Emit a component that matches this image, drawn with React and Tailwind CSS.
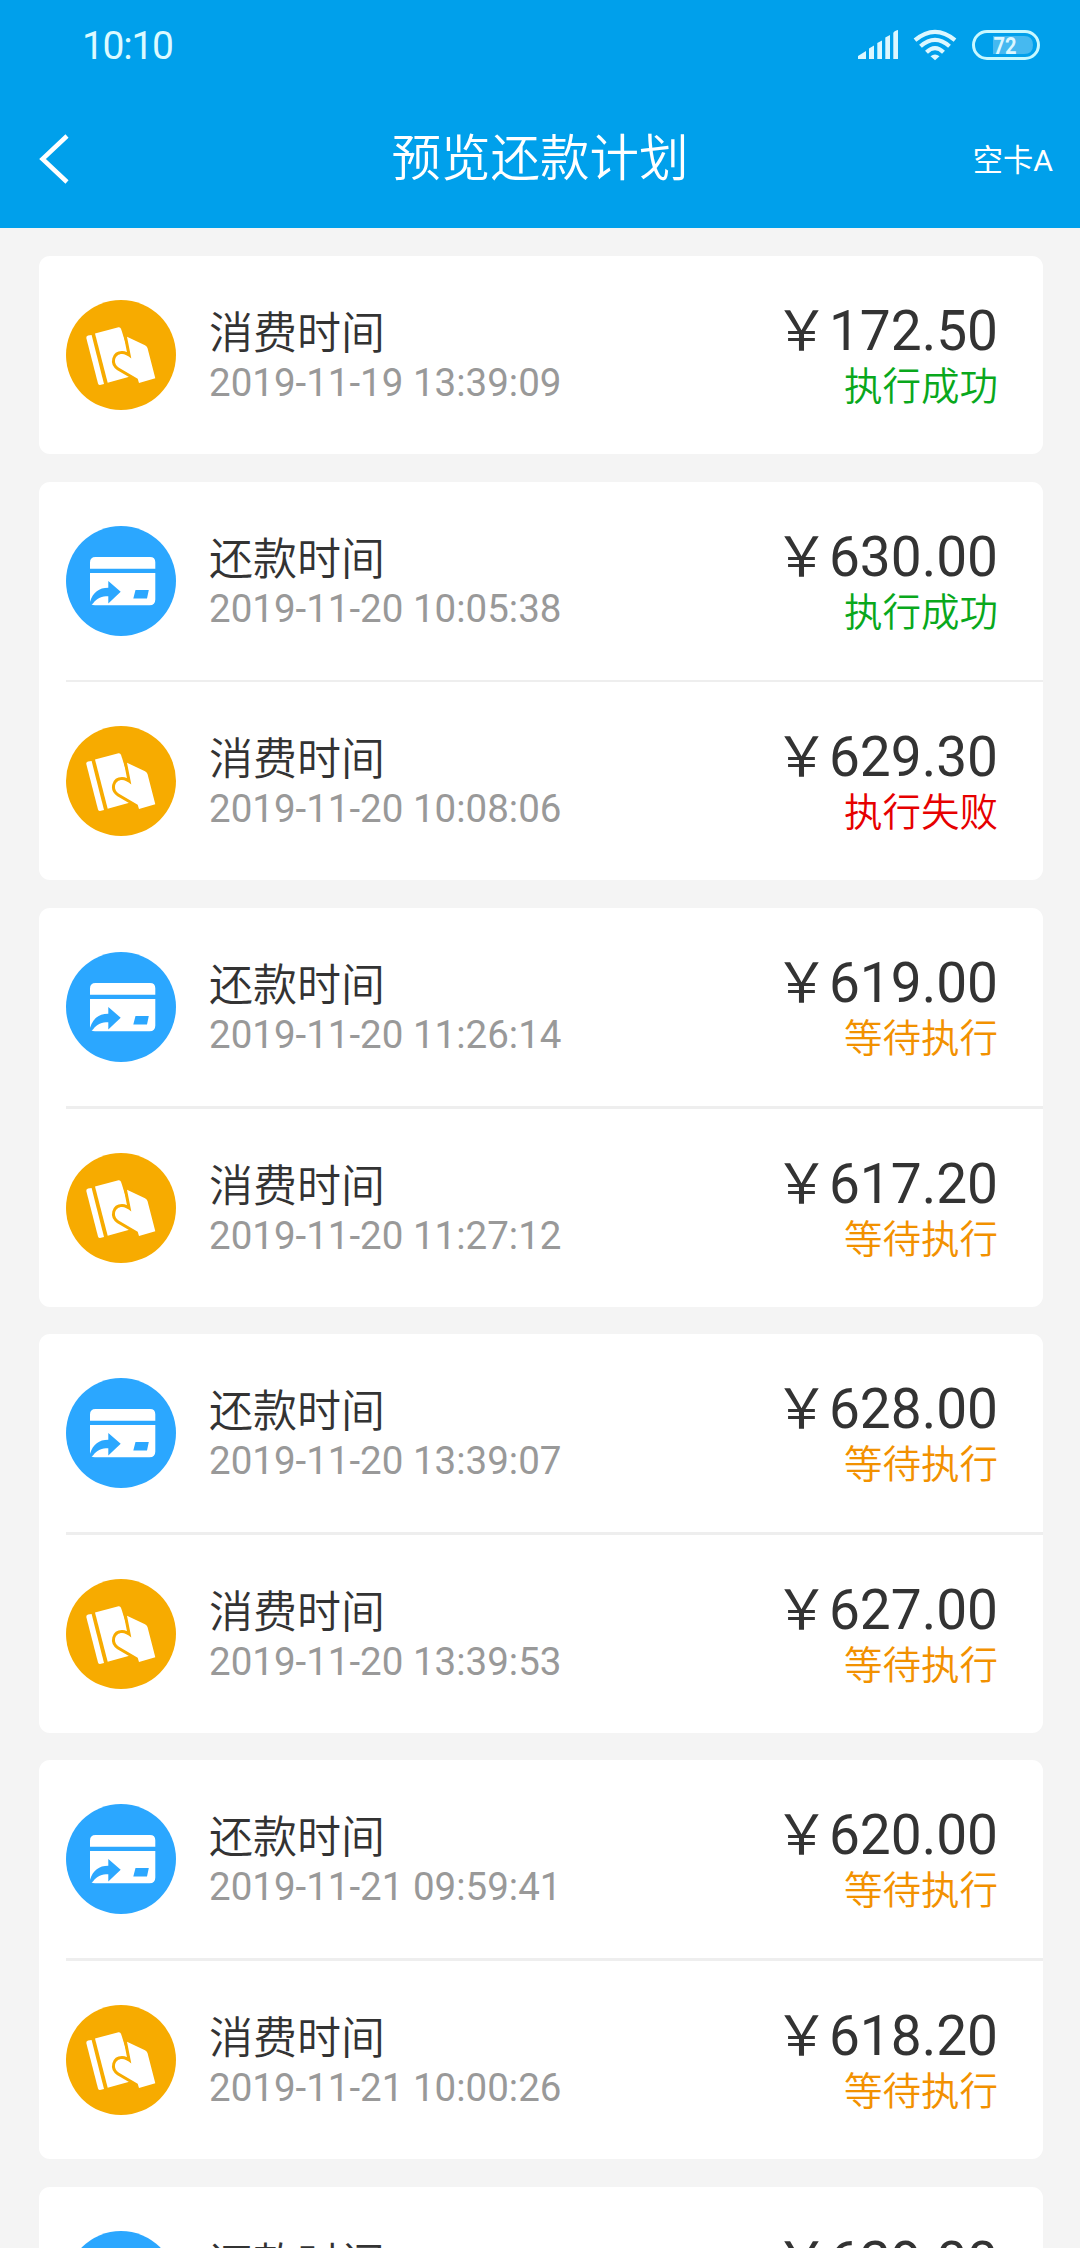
const groups = [
  [{ type: "spend", time: "2019-11-19 13:39:09", amount: "172.50", status: "success" }],
  [
    { type: "repay", time: "2019-11-20 10:05:38", amount: "630.00", status: "success" },
    { type: "spend", time: "2019-11-20 10:08:06", amount: "629.30", status: "failed" },
  ],
  [
    { type: "repay", time: "2019-11-20 11:26:14", amount: "619.00", status: "pending" },
    { type: "spend", time: "2019-11-20 11:27:12", amount: "617.20", status: "pending" },
  ],
  [
    { type: "repay", time: "2019-11-20 13:39:07", amount: "628.00", status: "pending" },
    { type: "spend", time: "2019-11-20 13:39:53", amount: "627.00", status: "pending" },
  ],
  [
    { type: "repay", time: "2019-11-21 09:59:41", amount: "620.00", status: "pending" },
    { type: "spend", time: "2019-11-21 10:00:26", amount: "618.20", status: "pending" },
  ],
  [{ type: "repay", time: "2019-11-21 11:18:32", amount: "629.00", status: "pending" }],
];

const statuses = {
  success: { label: "执行成功", color: "text-[#09a81c]" },
  failed: { label: "执行失败", color: "text-[#e60000]" },
  pending: { label: "等待执行", color: "text-[#f29100]" },
};

function SpendIcon() {
  return (
    <svg viewBox="0 0 110 110" className="size-[110px] shrink-0">
      <circle cx="55" cy="55" r="55" fill="#f7ab00" />
      <g fill="#fff">
        <path d="M22 35.5 25.6 35 38 84 34 85Q32.5 85 32 83.5L20.3 38Q20 36 22 35.5Z" />
        <path d="M29 33.5 52.5 27.3Q54.3 27 55 28.8L65 60 66 76 41.7 82.7Z" />
      </g>
      <path
        d="M61 36.7 79 45.2Q81 46.3 81.5 48L89.3 78.3 73 83 71.7 78.7 53 67.8C46 63 49 54 56 54Q60 54 65.3 58.6Z"
        fill="#fff"
        stroke="#f7ab00"
        strokeWidth="6"
        paintOrder="stroke"
      />
    </svg>
  );
}

function RepayIcon() {
  return (
    <svg viewBox="0 0 110 110" className="size-[110px] shrink-0">
      <circle cx="55" cy="55" r="55" fill="#2ba7ff" />
      <path
        d="M29.5 31H84Q89.3 31 89.3 36.3V42.7H24V36.5Q24 31 29.5 31ZM24 47H89.3V73.5Q89.3 79.3 83.5 79.3H29Q24 79.3 24 74Z"
        fill="#fff"
      />
      <path
        d="M24 76C27 66 33 61.7 42.3 61.7V55L54.7 65.7 42.3 77.5V70.3C36 70.3 31 72 27 77.5L24 79.5ZM69.5 64H82.8L81 72.5H67.3Z"
        fill="#2ba7ff"
      />
    </svg>
  );
}

function StatusIcons() {
  return (
    <svg viewBox="0 0 184 32" className="h-8 w-[184px]" fill="none">
      <path
        d="M0 30V27L8 22V30ZM11 30V19.5L16 16.5V30ZM19.3 30V14L24 11.5V30ZM27.3 30V8.5L32 6V30ZM35.3 30V4Q36 2 40 1V30Z"
        fill="#dcf7ff"
      />
      <g stroke="#dcf7ff" strokeWidth="4.2">
        <path d="M57 11.2Q77-5.4 97 11.2" />
        <path d="M62.5 17.3Q77 4.5 91.5 17.3" />
        <path d="M68.5 23.2Q77 15 85.5 23.2" />
      </g>
      <path d="M72.5 27.3Q77 23.5 81.5 27.3L77 31.3Z" fill="#dcf7ff" />
      <rect x="115.5" y="2.5" width="65" height="27" rx="13.5" stroke="#c8f8ff" strokeWidth="3" />
      <path d="M135 7H166Q175 7 175 16T166 25H135Z" fill="#46b9f0" />
      <g transform="translate(135.5 24.7) scale(.84 1)">
        <text fontSize="24" fontWeight="700" className="font-[Roboto,sans-serif]" fill="#dcf7ff">
          72
        </text>
      </g>
    </svg>
  );
}

function PlanRow({ item }) {
  const status = statuses[item.status];
  return (
    <div className="flex h-[198px] items-center pr-[45px]">
      {item.type === "repay" ? <RepayIcon /> : <SpendIcon />}
      <div className="ml-[33px] flex-1 pt-[2px]">
        <div className="text-[44px] leading-[54px]">
          {item.type === "repay" ? "还款时间" : "消费时间"}
        </div>
        <div className="text-[38.5px] leading-[44px] font-normal text-[#999]">{item.time}</div>
      </div>
      <div className="text-right">
        <div className="text-[55px] leading-[64px] font-normal">
          {"\uFFE5"}
          {item.amount}
        </div>
        <div className={`text-[38.5px] leading-[48px] ${status.color}`}>{status.label}</div>
      </div>
    </div>
  );
}

export default function App() {
  return (
    <div className="h-[2248px] w-[1080px] overflow-hidden bg-[#f4f4f4] font-[Roboto,'Noto_Sans_CJK_SC',sans-serif] font-[350] text-[#333]">
      {/* Header */}
      <header className="h-[228px] bg-[#00a0eb] text-white">
        <div className="flex h-[90px] items-center justify-between pr-[38px] pl-[82px]">
          <span className="pt-0.5 text-[39px] font-normal tracking-[-1.3px] text-[#dcfaff]">10:10</span>
          <StatusIcons />
        </div>
        <div className="grid h-[138px] grid-cols-[1fr_auto_1fr] items-center px-[27px]">
          <svg viewBox="0 0 30 50" className="ml-3 h-[50px] w-[30px]" fill="none" stroke="#fff" strokeWidth="4.5">
            <path d="M28 2 3.5 25 28 48" />
          </svg>
          <h1 className="text-center text-[49.5px] whitespace-nowrap">预览还款计划</h1>
          <span className="pt-1 text-right text-[30.25px] font-normal">空卡A</span>
        </div>
      </header>

      {/* Plan groups */}
      <main className="flex flex-col gap-[27.5px] pt-[28px] pr-[37px] pl-[39px]">
        {groups.map((group, i) => (
          <section key={i} className="rounded-[11px] bg-white pl-[27px]">
            {group.map((item, j) => (
              <div key={item.time}>
                {j > 0 && <div className="h-[2.75px] bg-[#eee]" />}
                <PlanRow item={item} />
              </div>
            ))}
          </section>
        ))}
      </main>
    </div>
  );
}
